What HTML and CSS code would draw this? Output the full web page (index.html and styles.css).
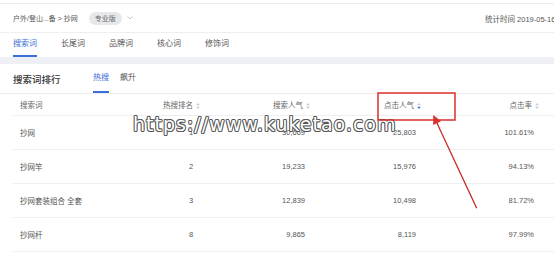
FILE: index.html
```html
<!DOCTYPE html>
<html lang="zh-CN">
<head>
    <meta charset="UTF-8">
    <meta name="viewport" content="width=device-width, initial-scale=1.0">
    <title>搜索词排行</title>
    <link rel="stylesheet" href="styles.css">
</head>
<body>
    <div class="page">
        <div class="topbar">
            <div class="crumbs">
                <span class="path">户外/登山...备 &gt; 抄网</span>
                <span class="badge">专业版</span>
                <svg class="chevron" width="6" height="4" viewBox="0 0 6 4">
                    <path d="M0.5 0.5 L3 3 L5.5 0.5" fill="none" stroke="#b8bcc4" stroke-width="0.8"/>
                </svg>
            </div>
            <div class="stat-time">统计时间 2019-05-16</div>
        </div>

        <div class="tabs">
            <span class="tab active">搜索词</span>
            <span class="tab">长尾词</span>
            <span class="tab">品牌词</span>
            <span class="tab">核心词</span>
            <span class="tab">修饰词</span>
        </div>

        <div class="band"></div>

        <div class="rank-head">
            <h2>搜索词排行</h2>
            <div class="subtabs">
                <span class="subtab active">热搜</span>
                <span class="subtab">飙升</span>
            </div>
        </div>

        <div class="table">
            <div class="row head">
                <div class="cell word">搜索词</div>
                <div class="cell rank">热搜排名<svg class="sort" viewBox="0 0 5 8"><path d="M2.5 0 L5 3 L0 3 Z"/><path d="M0 5 L5 5 L2.5 8 Z"/></svg></div>
                <div class="cell num">搜索人气<svg class="sort" viewBox="0 0 5 8"><path d="M2.5 0 L5 3 L0 3 Z"/><path d="M0 5 L5 5 L2.5 8 Z"/></svg></div>
                <div class="cell num">点击人气<svg class="sort" viewBox="0 0 5 8"><path d="M2.5 0 L5 3 L0 3 Z"/><path class="on" d="M0 5 L5 5 L2.5 8 Z"/></svg></div>
                <div class="cell num">点击率<svg class="sort" viewBox="0 0 5 8"><path d="M2.5 0 L5 3 L0 3 Z"/><path d="M0 5 L5 5 L2.5 8 Z"/></svg></div>
            </div>
            <div class="row">
                <div class="cell word">抄网</div>
                <div class="cell rank">1</div>
                <div class="cell num">30,669</div>
                <div class="cell num">25,803</div>
                <div class="cell num">101.61%</div>
            </div>
            <div class="row">
                <div class="cell word">抄网竿</div>
                <div class="cell rank">2</div>
                <div class="cell num">19,233</div>
                <div class="cell num">15,976</div>
                <div class="cell num">94.13%</div>
            </div>
            <div class="row">
                <div class="cell word">抄网套装组合 全套</div>
                <div class="cell rank">3</div>
                <div class="cell num">12,839</div>
                <div class="cell num">10,498</div>
                <div class="cell num">81.72%</div>
            </div>
            <div class="row">
                <div class="cell word">抄网杆</div>
                <div class="cell rank">8</div>
                <div class="cell num">9,865</div>
                <div class="cell num">8,119</div>
                <div class="cell num">97.99%</div>
            </div>
        </div>

        <!-- watermark laid over the table -->
        <div class="watermark">https://www.kuketao.com</div>

        <!-- red annotation box + arrow -->
        <svg class="annot" width="554" height="253" viewBox="0 0 554 253">
            <rect x="378" y="93" width="77" height="27" fill="none" stroke="#d9302c" stroke-width="1.5"/>
            <line x1="476.7" y1="208.3" x2="436" y2="121" stroke="#c8282a" stroke-width="1.3"/>
            <path d="M433.3 115 L441 121.3 L433.2 125 Z" fill="#d9302c"/>
        </svg>
    </div>
</body>
</html>
```

FILE: styles.css
```css
body, html {
    margin: 0;
    padding: 0;
    background: #ffffff;
    overflow: hidden;
}

.page {
    position: relative;
    width: 554px;
    height: 253px;
    overflow: hidden;
    font-family: 'Liberation Sans', 'Noto Sans CJK SC', sans-serif;
    color: #555555;
}

.topbar {
    margin-top: 3px;
    height: 28px;
    border-top: 1px solid #ececec;
    border-bottom: 1px solid #efefef;
    display: grid;
    grid-template-columns: 1fr 69px;
    align-items: center;
}

.crumbs {
    display: flex;
    align-items: center;
    padding-left: 13px;
    font-size: 7px;
    color: #555555;
}

.badge {
    margin-left: 11px;
    padding: 0 6px;
    height: 13px;
    line-height: 13px;
    border-radius: 7px;
    background: #e6e8ec;
    color: #666666;
    font-size: 7px;
}

.chevron {
    margin-left: 5px;
}

.stat-time {
    white-space: nowrap;
    font-size: 7.5px;
    color: #555555;
}

.tabs {
    display: flex;
    padding-left: 13px;
    gap: 24px;
    height: 24px;
}

.tab {
    padding-top: 6px;
    padding-bottom: 7px;
    line-height: 9px;
    font-size: 8px;
    color: #555555;
    border-bottom: 2px solid transparent;
}

.tab.active {
    color: #3a6fd8;
    border-bottom-color: #3a6fd8;
}

.band {
    height: 7px;
    background: #eef0f5;
}

.rank-head {
    display: flex;
    align-items: center;
    height: 29px;
    padding-left: 13px;
    border-bottom: 1px solid #ececec;
}

.rank-head h2 {
    margin: 0;
    font-size: 9.5px;
    font-weight: 500;
    color: #333333;
    width: 80px;
}

.subtabs {
    display: flex;
    gap: 11px;
    height: 100%;
}

.subtab {
    padding-top: 9px;
    line-height: 9px;
    font-size: 8px;
    color: #555555;
    border-bottom: 2px solid transparent;
    box-sizing: border-box;
    height: 29px;
}

.subtab.active {
    color: #3a6fd8;
    border-bottom-color: #3a6fd8;
}

.table {
    margin-left: 13px;
}

.row {
    display: grid;
    grid-template-columns: 137px 80px 80px 111px 118px;
    align-items: center;
    height: 33px;
    border-bottom: 1px solid #efefef;
    font-size: 7.5px;
    color: #555555;
}

.row.head {
    height: 21px;
    color: #666666;
}

.cell.word {
    padding-left: 7px;
}

.cell.rank {
    padding-left: 39px;
}

.head .cell.rank {
    padding-left: 13px;
}

.cell.num {
    text-align: right;
    padding-right: 5px;
}

.head .cell.num {
    padding-right: 0;
}

.sort {
    width: 4px;
    height: 6px;
    margin-left: 3px;
    vertical-align: -0.5px;
    fill: #c5cad3;
}

.sort .on {
    fill: #3a6fd8;
}

.watermark {
    position: absolute;
    left: 133px;
    top: 112px;
    font-family: 'DejaVu Sans', sans-serif;
    font-size: 19px;
    line-height: 24px;
    letter-spacing: 1px;
    color: #ffffff;
    text-shadow:
        1px 0 0 #5a5a5a, -1px 0 0 #5a5a5a,
        0 1px 0 #5a5a5a, 0 -1px 0 #5a5a5a,
        0.7px 0.7px 0 #5a5a5a, -0.7px 0.7px 0 #5a5a5a,
        0.7px -0.7px 0 #5a5a5a, -0.7px -0.7px 0 #5a5a5a;
    white-space: nowrap;
}

.annot {
    position: absolute;
    left: 0;
    top: 0;
    pointer-events: none;
}
```
